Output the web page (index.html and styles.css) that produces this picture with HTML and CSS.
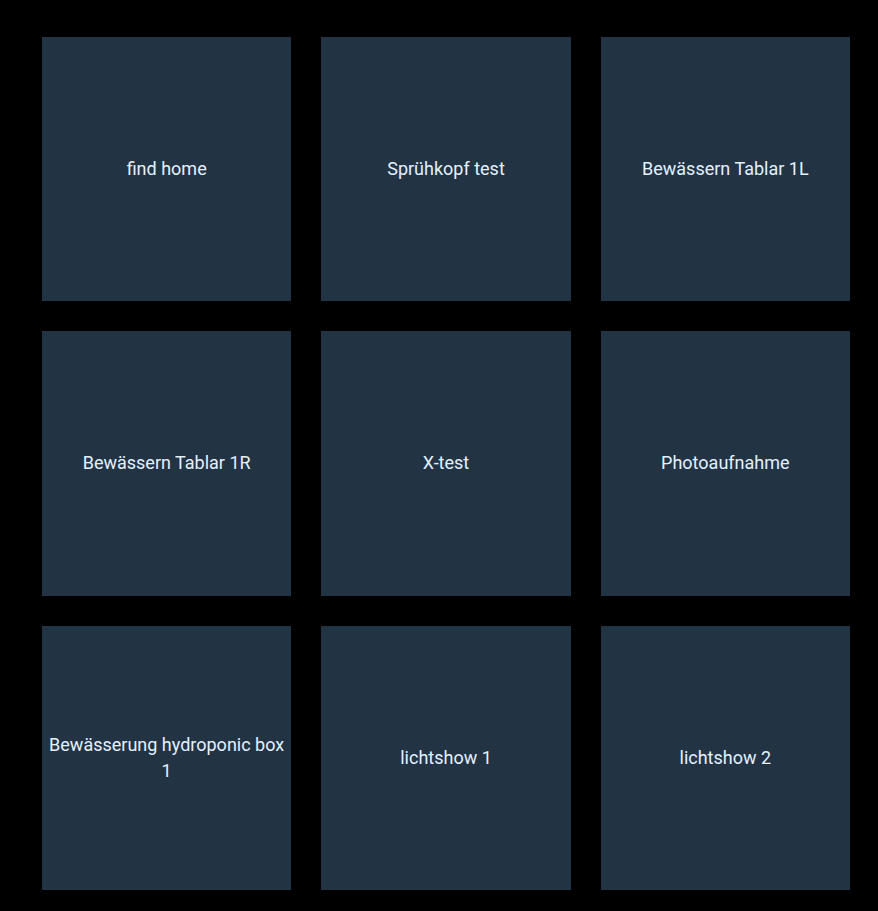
FILE: index.html
```html
<!DOCTYPE html>
<html>
<head>
<meta charset="utf-8">
<link rel="stylesheet" href="styles.css">
</head>
<body>
<div class="grid">
  <div class="tile">find home</div>
  <div class="tile">Sprühkopf test</div>
  <div class="tile">Bewässern Tablar 1L</div>
  <div class="tile">Bewässern Tablar 1R</div>
  <div class="tile">X-test</div>
  <div class="tile">Photoaufnahme</div>
  <div class="tile">Bewässerung hydroponic box 1</div>
  <div class="tile">lichtshow 1</div>
  <div class="tile">lichtshow 2</div>
</div>
</body>
</html>
```
FILE: styles.css
```css
html, body {
  margin: 0;
  padding: 0;
  background: #000;
}
.grid {
  display: grid;
  grid-template-columns: repeat(3, 249.33px);
  grid-auto-rows: 264.33px;
  gap: 30px;
  padding: 37px 0 0 42px;
}
.tile {
  background: #223344;
  color: #e3f1ff;
  font-family: Roboto, "Liberation Sans", sans-serif;
  font-size: 18px;
  line-height: 26px;
  display: flex;
  align-items: center;
  justify-content: center;
  text-align: center;
  padding: 0 6px;
}
```
